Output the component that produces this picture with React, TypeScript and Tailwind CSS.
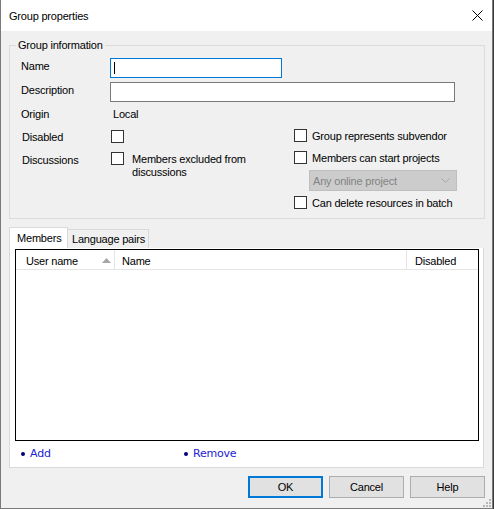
import React from 'react';

const font = { fontFamily: '"Liberation Sans", Arial, sans-serif' };

function CheckBox() {
  return <div className="w-[13px] h-[13px] shrink-0 border border-[#333333] bg-white" />;
}

function LinkButton({ label }: { label: string }) {
  return (
    <div className="flex items-center gap-[5px] text-[11px] leading-[13px] text-[#2222d6]" style={{ fontFamily: '"DejaVu Sans", Verdana, sans-serif' }}>
      <span className="w-[4px] h-[4px] rounded-full bg-[#00007a]" />
      <span>{label}</span>
    </div>
  );
}

export default function App() {
  return (
    <div className="w-[494px] h-[509px] bg-[#3a3a3a] text-[11px] tracking-[-0.2px] text-black" style={font}>
      <div className="relative w-[493px] h-[509px] flex flex-col bg-[#f0f0f0] border-l border-r border-b border-[#7a7a7a]">
        {/* Title bar */}
        <div className="h-[31px] shrink-0 bg-white flex items-center justify-between pl-[8px] pr-[8px]">
          <span className="leading-[13px] mt-[2px]">Group properties</span>
          <svg width="11" height="11" viewBox="0 0 11 11" className="mr-[1px]">
            <path d="M0.5 0.5 L10.5 10.5 M10.5 0.5 L0.5 10.5" stroke="#000" strokeWidth="1" />
          </svg>
        </div>

        {/* Group information */}
        <div className="relative ml-[8px] mt-[14px] w-[476px] h-[174px] border border-[#dcdcdc] pt-[12px] pl-[11px] leading-[14px]">
          <span className="absolute -top-[8px] left-[6px] px-[2px] bg-[#f0f0f0]">Group information</span>

          <div className="flex items-start">
            <span className="w-[89px] pt-[1px]">Name</span>
            <div className="w-[172px] h-[20px] border border-[#0078d7] bg-white flex items-center pl-[3px]">
              <span className="w-px h-[12px] bg-black" />
            </div>
          </div>
          <div className="flex items-start mt-[4px]">
            <span className="w-[89px] pt-[1px]">Description</span>
            <div className="w-[345px] h-[20px] border border-[#7a7a7a] bg-white" />
          </div>
          <div className="flex items-start mt-[5px]">
            <span className="w-[92px]">Origin</span>
            <span>Local</span>
          </div>

          <div className="flex mt-[8px]">
            <div className="w-[273px] pt-[1px]">
              <div className="flex items-start h-[22px]">
                <span className="w-[90px] pl-[1px]">Disabled</span>
                <CheckBox />
              </div>
              <div className="flex items-start">
                <span className="w-[90px] pl-[1px] pt-[1px]">Discussions</span>
                <CheckBox />
                <span className="ml-[8px] w-[130px] leading-[13px] pt-[1px]">Members excluded from discussions</span>
              </div>
            </div>
            <div className="flex flex-col">
              <div className="flex items-start h-[22px] gap-[5px]">
                <CheckBox />
                <span>Group represents subvendor</span>
              </div>
              <div className="flex items-start h-[19px] gap-[5px]">
                <CheckBox />
                <span>Members can start projects</span>
              </div>
              <div className="ml-[15px] w-[148px] h-[21px] bg-[#cccccc] border border-[#bfbfbf] flex items-center justify-between pl-[3px] pr-[6px] text-[#838383]">
                <span>Any online project</span>
                <svg width="9" height="5" viewBox="0 0 9 5">
                  <path d="M0.5 0.5 L4.5 4.5 L8.5 0.5" stroke="#a8a8a8" fill="none" strokeWidth="1" />
                </svg>
              </div>
              <div className="flex items-start mt-[5px] gap-[5px]">
                <CheckBox />
                <span>Can delete resources in batch</span>
              </div>
            </div>
          </div>
        </div>

        {/* Tabs */}
        <div className="flex items-end ml-[8px] mt-[8px] h-[21px] leading-[14px]">
          <div className="h-[21px] w-[59px] bg-white border-t border-l border-r border-[#d9d9d9] pl-[7px] pt-[3px]">Members</div>
          <div className="h-[19px] w-[81px] bg-[#f0f0f0] border-t border-r border-[#d9d9d9] pl-[4px] pt-[2px]">Language pairs</div>
        </div>
        <div className="ml-[8px] w-[475px] h-[220px] bg-white border-l border-r border-b border-[#d9d9d9] pl-[5px] pt-[1px] flex flex-col">
          <div className="w-[464px] h-[192px] border border-black flex flex-col">
            <div className="flex h-[20px] border-b border-[#e5e5e5] leading-[14px]">
              <div className="w-[99px] border-r border-[#e5e5e5] flex items-start justify-between pl-[10px] pr-[3px] pt-[4px]">
                <span>User name</span>
                <svg width="9" height="5" viewBox="0 0 9 5" className="mt-[4px]">
                  <path d="M0 5 L4.5 0 L9 5 Z" fill="#a6a6a6" />
                </svg>
              </div>
              <div className="w-[292px] border-r border-[#e5e5e5] pl-[7px] pt-[4px]">Name</div>
              <div className="flex-1 pl-[8px] pt-[4px]">Disabled</div>
            </div>
          </div>
          <div className="flex mt-[6px] pl-[6px]">
            <div className="w-[163px]"><LinkButton label="Add" /></div>
            <LinkButton label="Remove" />
          </div>
        </div>

        {/* Buttons */}
        <div className="flex justify-end gap-[6px] pr-[7px] mt-[8px]">
          <button className="w-[75px] h-[22px] bg-[#e1e1e1] border-2 border-[#0078d7]">OK</button>
          <button className="w-[75px] h-[22px] bg-[#e1e1e1] border border-[#adadad]">Cancel</button>
          <button className="w-[75px] h-[22px] bg-[#e1e1e1] border border-[#adadad]">Help</button>
        </div>

        {/* Resize grip */}
        <svg width="8" height="8" viewBox="0 0 8 8" className="absolute right-[1px] bottom-[1px]">
          <rect x="6" y="0" width="2" height="2" fill="#b8b8b8" />
          <rect x="3" y="3" width="2" height="2" fill="#b8b8b8" />
          <rect x="6" y="3" width="2" height="2" fill="#b8b8b8" />
          <rect x="0" y="6" width="2" height="2" fill="#b8b8b8" />
          <rect x="3" y="6" width="2" height="2" fill="#b8b8b8" />
          <rect x="6" y="6" width="2" height="2" fill="#b8b8b8" />
        </svg>
      </div>
    </div>
  );
}
